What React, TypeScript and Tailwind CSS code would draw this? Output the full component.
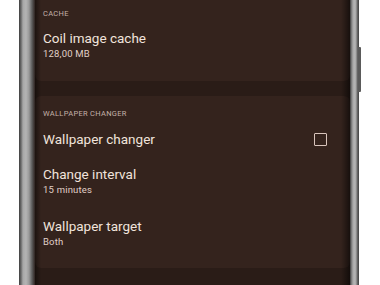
import React from "react";

const Label = ({ children, className = "" }: { children: React.ReactNode; className?: string }) => (
  <div className={`text-[7.5px] leading-[10px] tracking-[0.3px] text-[#c4b2aa] ${className}`}>{children}</div>
);

const Item = ({
  title,
  sub,
  className = "",
  right,
}: {
  title: string;
  sub?: string;
  className?: string;
  right?: React.ReactNode;
}) => (
  <div className={`flex items-center justify-between pr-[23px] ${className}`}>
    <div>
      <div className="text-[13.5px] leading-[16px] text-[#f1e3dc]">{title}</div>
      {sub && <div className="mt-[2px] text-[9.5px] leading-[12px] tracking-[0.2px] text-[#e0d0c8]">{sub}</div>}
    </div>
    {right}
  </div>
);

export default function App() {
  return (
    <div
      className="relative flex h-[285px] w-[380px] overflow-hidden bg-white pl-[19px]"
      style={{ fontFamily: "Roboto, 'Noto Sans', sans-serif" }}
    >
      {/* left bezel */}
      <div className="h-full w-[16px] bg-[linear-gradient(to_right,#3e3e3e_0px,#6a6a6a_2px,#a8a8a8_4px,#b4b4b4_7px,#9a9a9a_10px,#5c5c5c_13px,#2e2320_16px)]" />
      {/* screen */}
      <div className="relative h-full w-[315px] bg-[#2a1c17]">
        <div className="h-[81px] rounded-b-[6px] bg-[#34231d] pl-[8px]">
          <Label className="pt-[9px]">CACHE</Label>
          <Item className="mt-[11px]" title="Coil image cache" sub="128,00 MB" />
        </div>
        <div className="mt-[15px] h-[172px] rounded-[6px] bg-[#34231d] pl-[8px]">
          <Label className="pt-[13px]">WALLPAPER CHANGER</Label>
          <Item
            className="mt-[12px]"
            title="Wallpaper changer"
            right={<div className="h-[13px] w-[13px] rounded-[1px] border-[1.5px] border-[#d8c4bc]" />}
          />
          <Item className="mt-[19px]" title="Change interval" sub="15 minutes" />
          <Item className="mt-[22px]" title="Wallpaper target" sub="Both" />
        </div>
        <div className="pointer-events-none absolute inset-y-0 left-0 w-[6px] bg-[linear-gradient(to_right,rgba(0,0,0,0.45),rgba(0,0,0,0))]" />
        <div className="pointer-events-none absolute inset-y-0 right-0 w-[9px] bg-[linear-gradient(to_left,rgba(0,0,0,0.55),rgba(0,0,0,0))]" />
      </div>
      {/* right bezel */}
      <div className="h-full w-[9px] bg-[linear-gradient(to_right,#3a3a3a_0px,#8e8e8e_2px,#b6b6b6_4px,#a8a8a8_6px,#707070_7px,#404040_9px)]" />
      {/* side button */}
      <div className="absolute left-[358px] top-[47px] h-[45px] w-[3px] rounded-r-[1px] bg-[#5a5a5a]" />
    </div>
  );
}
